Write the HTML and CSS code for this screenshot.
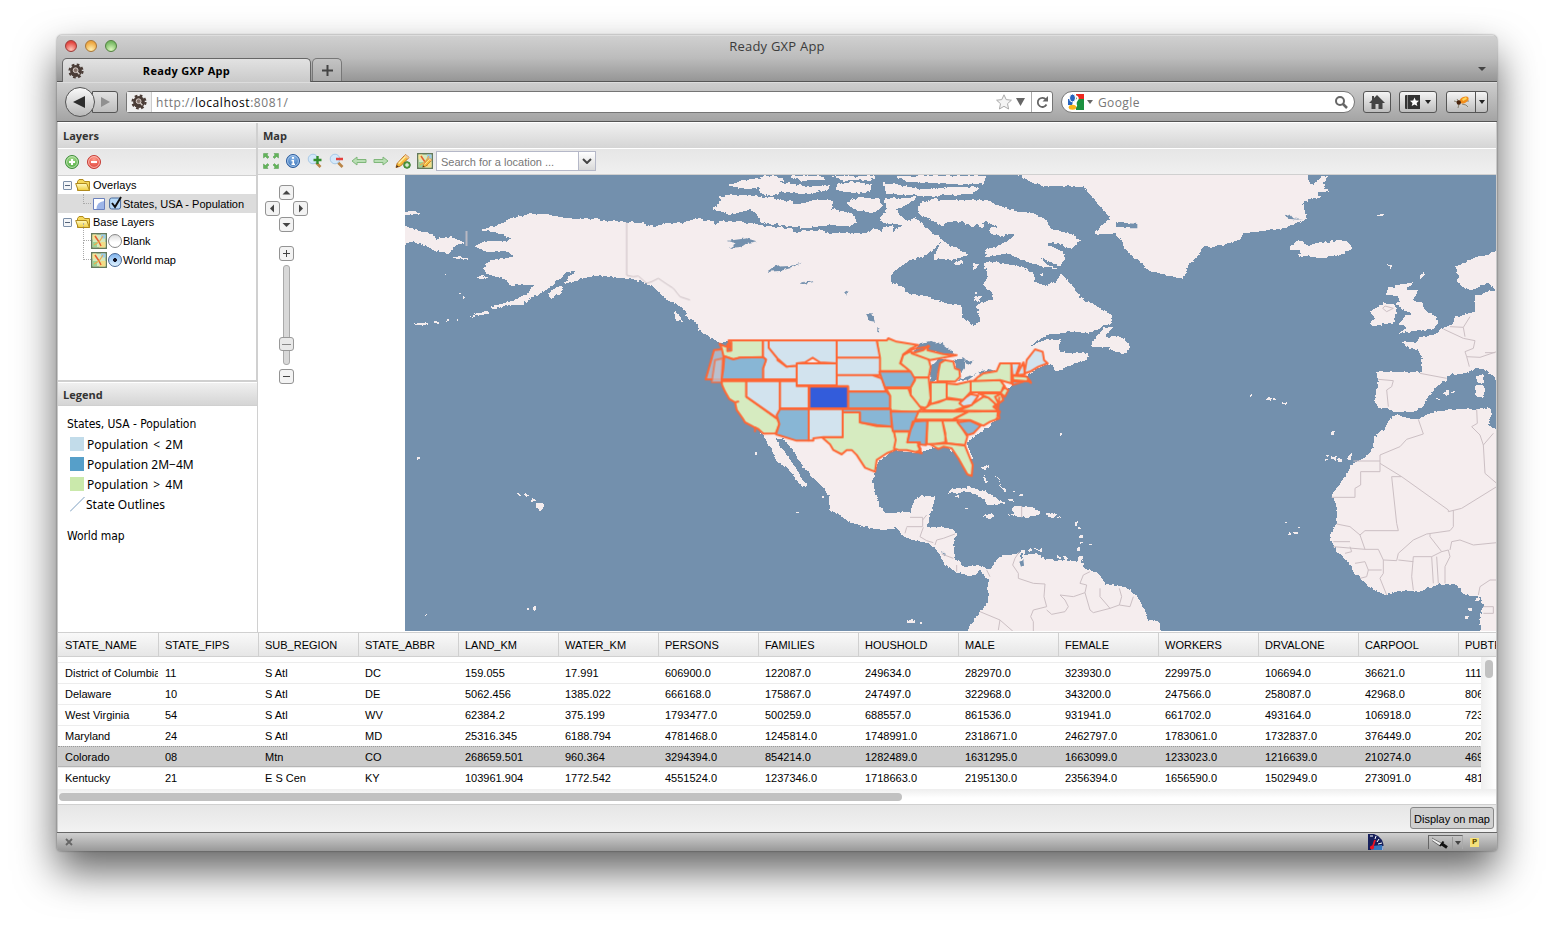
FILE: index.html
```html
<!DOCTYPE html>
<html lang="en">
<head>
<meta charset="utf-8">
<title>Ready GXP App</title>
<link rel="stylesheet" href="styles.css">
</head>
<body>
<svg class="defs" width="0" height="0">
  <defs>
    <linearGradient id="gold" x1="0" y1="0" x2="0" y2="1"><stop offset="0" stop-color="#fffbc4"/><stop offset="1" stop-color="#f0cd3e"/></linearGradient>
    <radialGradient id="green" cx=".5" cy=".3" r=".7"><stop offset="0" stop-color="#a5dc8c"/><stop offset="1" stop-color="#4aa83e"/></radialGradient>
    <radialGradient id="red" cx=".5" cy=".3" r=".7"><stop offset="0" stop-color="#ff9c8c"/><stop offset="1" stop-color="#dd3c33"/></radialGradient>
    <radialGradient id="blue" cx=".5" cy=".3" r=".7"><stop offset="0" stop-color="#8db8e8"/><stop offset="1" stop-color="#346eb5"/></radialGradient>
    <symbol id="gear" viewBox="0 0 16 16">
      <circle cx="8" cy="8" r="6.500" fill="none" stroke="#4a3c36" stroke-width="2.200" stroke-dasharray="2.700 2.400"/>
      <circle cx="8" cy="8" r="5.900" fill="#4a3c36"/><circle cx="7.600" cy="7.200" r="2.400" fill="#85736b" stroke="#d9d0cb" stroke-width="1"/><path d="M9.400 9l2 2.200" stroke="#d9d0cb" stroke-width="1.300"/>
    </symbol>
    <symbol id="folder" viewBox="0 0 16 14">
      <path d="M2.500 12.500v-9l1.500-2h4l1.500 2h5v9z" fill="#f5d85c" stroke="#b08a1d"/><path d="M.7 5.500h11l2.800 7H3.200z" fill="url(#gold)" stroke="#b08a1d"/>
    </symbol>
    <symbol id="mapicon" viewBox="0 0 16 16">
      <path d="M.7.700h14.600v14.600H.700z" fill="#d7e9bd" stroke="#647a5c" stroke-width="1.400"/><path d="M1.500 1.500h4v5h-4z" fill="#f4e493"/><path d="M10 1.500h4.500v4H10z" fill="#9acbe8"/><path d="M10 9h4.500v5.500H8z" fill="#f2dd86"/><path d="M2 9h4v5H2z" fill="#9ad494"/><path d="M4 3l4 6 2 4" fill="none" stroke="#e35f32" stroke-width="1.500"/><path d="M12 3l-4 6-5 3" fill="none" stroke="#ecaa4e" stroke-width="1.200"/>
    </symbol>
    <symbol id="pencil" viewBox="0 0 16 16">
      <path d="M1 14.500l1.200-4L10.500 1.500l3.500 3-8.500 8.600z" fill="#f8bd3c" stroke="#b86b16"/><path d="M3.500 10.500L11 3" stroke="#fff0a8" stroke-width="1.400"/><path d="M1 14.500l.8-2.500 2 1.700z" fill="#473222"/><path d="M10.500 1.500l3.500 3-1.200 1.300-3.500-3z" fill="#f2c79a"/>
    </symbol>
    <symbol id="lens" viewBox="0 0 16 16">
      <path d="M9 9.500l4.500 4.500" stroke="#b98547" stroke-width="2.600"/><circle cx="6" cy="6" r="4.800" fill="#d3e8fa" stroke="#a9c9e6"/>
    </symbol>
    <symbol id="cbtn" viewBox="0 0 15 15"><rect x=".5" y=".5" width="14" height="14" rx="2.500" fill="#f3f3f3" stroke="#939393"/></symbol>
  </defs>
</svg>

<div class="window">
  <header class="titlebar">
    <div class="lights"><i class="light red"></i><i class="light amber"></i><i class="light lime"></i></div>
    <span class="window-title">Ready GXP App</span>
  </header>
  <div class="tabs">
    <div class="tab"><svg width="16" height="16"><use href="#gear"/></svg><span>Ready GXP App</span></div>
    <div class="newtab"><svg width="11" height="11"><path d="M5.500 0v11M0 5.500h11" stroke="#444" stroke-width="2"/></svg></div>
    <svg class="tabmenu" width="8" height="5"><path d="M0 0h8L4 4z" fill="#444"/></svg>
  </div>
  <div class="nav">
    <div class="backfwd">
      <div class="back"><svg width="12" height="14"><path d="M12 1v12L0 7z" fill="#2e2e2e"/></svg></div>
      <div class="fwd"><svg width="9" height="10"><path d="M0 0v10l9-5z" fill="#909090"/></svg></div>
    </div>
    <div class="url">
      <div class="favicon"><svg width="16" height="16"><use href="#gear"/></svg></div>
      <span class="address">http://<b>localhost</b>:8081/</span>
      <svg width="16" height="16" viewBox="0 0 16 16"><path d="M8 .8l2.200 4.800 5.200.6-3.900 3.500 1.100 5.300L8 12.300 3.400 15l1.100-5.300L.6 6.200l5.200-.6z" fill="#f4f4f4" stroke="#aaa"/></svg>
      <svg class="urldrop" width="9" height="8"><path d="M0 0h9L4.500 8z" fill="#666"/></svg>
      <div class="reload"><svg width="13" height="13" viewBox="0 0 13 13"><path d="M10.500 8.500a4.600 4.600 0 1 1-.5-5" fill="none" stroke="#666" stroke-width="1.800"/><path d="M12 0v5.500H6.500z" fill="#666"/></svg></div>
    </div>
    <div class="search">
      <svg width="16" height="16"><path d="M7 0h9v16H7z" fill="#1b9140"/><path d="M8 0h8v5H9z" fill="#ee2820"/><path d="M0 0h8v16H0z" fill="#fff"/><path d="M0 5h5v6H0z" fill="#2864bd"/><ellipse cx="4.500" cy="4" rx="3" ry="4" fill="#2864bd" stroke="#fff"/><path d="M5 8q5 1 4 5l-2-1-3-1z" fill="#fff"/><path d="M8 2q3 2 1 4t-1 4" fill="none" stroke="#fff" stroke-width="2"/><ellipse cx="4.500" cy="13.300" rx="3.800" ry="2.500" fill="#fab51b"/></svg>
      <svg class="engine" width="6" height="4"><path d="M0 0h6L3 4z" fill="#666"/></svg>
      <span>Google</span>
      <svg width="13" height="13"><circle cx="5" cy="5" r="4" fill="none" stroke="#666" stroke-width="2"/><path d="M8 8l4 4" stroke="#666" stroke-width="2.500"/></svg>
    </div>
    <div class="navbtn home"><svg width="16" height="14"><path d="M8 0l8 8h-2.500v6h-4V9h-3v5h-4V8H0l3-3V1h2v2z" fill="#444"/></svg></div>
    <div class="navbtn marks"><svg width="16" height="14"><path d="M0 1q0-1 1-1h14v14H1q-1 0-1-1z" fill="#333"/><path d="M2.500 0v14" stroke="#888"/><path d="M9.500 2.500l1.300 3 3.200.3-2.400 2.100.8 3.200-2.900-1.700-2.800 1.700.8-3.200L5 5.800l3.200-.3z" fill="#fff"/></svg><svg width="6" height="4"><path d="M0 0h6L3 4z" fill="#222"/></svg></div>
    <div class="navbtn bug"><div class="bugicon"><svg width="16" height="14"><path d="M0 6l4 1M3 4l2 3M8 9l4 1 2 2M5 9l-1 4M12 6h3" fill="none" stroke="#8b8472"/><ellipse cx="10" cy="5" rx="5" ry="3" transform="rotate(-28 10 5)" fill="#f18d1c"/><path d="M8 4l4-2 1 2-4 2z" fill="#ffd858"/><circle cx="4.800" cy="7.500" r="2.200" fill="#49240d"/></svg></div><svg width="6" height="4"><path d="M0 0h6L3 4z" fill="#222"/></svg></div>
  </div>

  <main class="app">
    <div class="upper">
      <aside class="side">
        <section class="layers">
          <h2 class="panel-head">Layers</h2>
          <div class="toolbar layer-tools">
            <svg width="14" height="14"><circle cx="7" cy="7" r="6.500" fill="url(#green)" stroke="#3f8d3c"/><circle cx="7" cy="7" r="5.400" fill="none" stroke="#d4efca" stroke-width=".8"/><path d="M7 4v6M4 7h6" stroke="#fff" stroke-width="2"/></svg>
            <svg width="14" height="14"><circle cx="7" cy="7" r="6.500" fill="url(#red)" stroke="#c43e37"/><circle cx="7" cy="7" r="5.400" fill="none" stroke="#ffcfc8" stroke-width=".8"/><path d="M4 7h6" stroke="#fff" stroke-width="2"/></svg>
          </div>
          <ul class="tree">
            <li class="branch"><i class="minus"></i><svg width="16" height="14"><use href="#folder"/></svg><span>Overlays</span></li>
            <li class="leaf selected"><i class="elbow"></i><svg width="12" height="12"><path d="M.5.500h11v11H.500z" fill="#fff" stroke="#6a80bd"/><path d="M3.500 11q0-7 7.500-8v8z" fill="#9db5e8"/></svg><svg class="check" width="13" height="14"><rect x=".6" y="2" width="11" height="11" rx="2" fill="#b9dbf8" stroke="#4b6b9c"/><path d="M3 7l3 4 6-10" fill="none" stroke="#111" stroke-width="2"/></svg><span>States, USA - Population</span></li>
            <li class="branch"><i class="minus"></i><svg width="16" height="14"><use href="#folder"/></svg><span>Base Layers</span></li>
            <li class="leaf base"><i class="elbow"></i><svg width="16" height="16"><use href="#mapicon"/></svg><i class="radio"></i><span>Blank</span></li>
            <li class="leaf base"><i class="elbow"></i><svg width="16" height="16"><use href="#mapicon"/></svg><i class="radio on"></i><span>World map</span></li>
          </ul>
        </section>
        <section class="legend">
          <h2 class="panel-head">Legend</h2>
          <div class="legend-body">
            <p class="legend-title">States, USA - Population</p>
            <p class="key"><i class="swatch low"></i><span class="sign">Population &lt; 2M</span></p>
            <p class="key"><i class="swatch mid"></i><span>Population 2M−4M</span></p>
            <p class="key"><i class="swatch high"></i><span class="sign">Population &gt; 4M</span></p>
            <p class="key line"><svg width="15" height="15"><path d="M0 14.500L14.500 0" stroke="#7d9fc0"/></svg><span>State Outlines</span></p>
            <p class="legend-title second">World map</p>
          </div>
        </section>
      </aside>

      <section class="mapside">
        <h2 class="panel-head">Map</h2>
        <div class="toolbar map-tools">
          <svg width="16" height="16" viewBox="0 0 16 16"><g fill="#63b45a" stroke="#3d8d3b" stroke-width=".4"><path d="M.5.500h4.500L4 2l2 2-1.500 1.500-2-2L.500 5zM15.500.500H11L12 2l-2 2 1.500 1.500 2-2L15.500 5zM.500 15.500H5L4 14l2-2-1.500-1.500-2 2L.500 11zM15.500 15.500H11l1-1.500-2-2 1.500-1.500 2 2 2-1.500z"/></g></svg>
          <svg width="16" height="16"><circle cx="8" cy="8" r="6.500" fill="url(#blue)" stroke="#2c5b9b"/><circle cx="8" cy="8" r="5.400" fill="none" stroke="#bcd8f5" stroke-width=".8"/><path d="M7 4h2v1.700H7zM6.500 7H9v3.500h1V12H6.500v-1.500h1V8.300h-1z" fill="#fff"/></svg>
          <svg width="16" height="16"><use href="#lens"/><path d="M10.500 3v8M6.500 7h8" stroke="#328d2c" stroke-width="2.400"/></svg>
          <svg width="16" height="16"><use href="#lens"/><path d="M7 6h7" stroke="#e4403d" stroke-width="2.600"/></svg>
          <svg width="16" height="16"><path d="M1 8l5-4v2.500h9v3H6V12z" fill="#b9deb4" stroke="#7fb77a"/></svg>
          <svg width="16" height="16"><path d="M15 8l-5-4v2.500H1v3h9V12z" fill="#b9deb4" stroke="#7fb77a"/></svg>
          <svg width="16" height="16"><use href="#pencil"/><circle cx="12" cy="12" r="3.300" fill="#5da64b" stroke="#397d31"/><path d="M12 10v4M10 12h4" stroke="#fff"/></svg>
          <svg width="16" height="16"><use href="#mapicon"/><g transform="translate(5 4) scale(.7)"><use href="#pencil" width="16" height="16"/></g></svg>
          <div class="combo"><span>Search for a location ...</span><div class="trigger"><svg width="10" height="6"><path d="M1 1l4 4 4-4" fill="none" stroke="#444" stroke-width="2"/></svg></div></div>
        </div>
        <div class="mapview">
          <svg class="map" width="1091" height="456" viewBox="405 175 1091 456">
            <defs><filter id="coast" x="405" y="175" width="1091" height="456" filterUnits="userSpaceOnUse"><feTurbulence type="fractalNoise" baseFrequency=".24" numOctaves="2" seed="8" result="n"/><feDisplacementMap in="SourceGraphic" in2="n" scale="4" xChannelSelector="R" yChannelSelector="G"/></filter></defs>
            <path d="M405 175h1091v456H405z" fill="#7390ad"/>
            <g filter="url(#coast)">
              <g fill="#f5edee" shape-rendering="crispEdges">
                <g transform="translate(400 170) scale(.33333)">
                  <path d="M240 180L290 168 330 145 400 130 440 133 490 143 550 143 620 152 680 157 720 158 760 170 800 160 850 158 890 145 910 152 930 150 945 165 970 153 1040 158 1100 168 1180 176V512H985L960 520 930 500 895 480 895 465 860 440 850 415 800 390 765 355 740 340 700 328 640 322 600 317 560 322 530 332 490 343 525 303 500 306 480 325 462 345 430 365 400 382 365 405 330 405 280 418 270 410 340 393 385 367 402 346 350 342 330 348 320 330 290 320 260 312 250 295 270 270 300 265 340 262 325 243 260 245 220 228 270 212 320 212 330 203 290 188z"/>
                  <path d="M0 125L45 123 60 131 0 137zM0 165L60 180 100 195 110 207 150 200 192 217 165 230 145 250 100 240 60 222 30 215 0 235zM152 260L205 264 205 270 175 268zM445 370L475 350 493 350 480 372 450 385zM228 320L250 315 265 324 240 327zM203 442L235 430 265 422 262 430 225 440zM45 459H85V465H45zM95 456L118 452 115 460zM132 312L146 316 140 320zM188 375h6v8h-6zM178 369h5v5h-5zM815 422L832 430 850 457 830 450zM140 451h6v5h-6zM170 448h5v6h-5z"/>
                  <path d="M940 118L965 90 955 78 1020 74 1090 80 1180 95V165L1095 162 1065 130 1050 118 1010 130 985 134 960 122zM985 47L1030 30 1090 23 1150 20 1150 35 1100 48 1180 42V68L1080 62 1110 45 1045 58z"/>
                  <path d="M52 862h8v4h-8zM1065 848h7v8h-7z"/>
                </g>
                <g transform="translate(760 170) scale(.33333)">
                  <path d="M-30 180L40 190 100 188 180 178 200 188 320 188 340 175 365 185 370 168 400 168 400 182 440 165 480 175 500 190 535 195 545 212 520 240 490 260 450 270 400 305 390 335 430 350 440 370 500 378 560 400 605 405 605 440 640 468 662 455 650 405 695 390 697 370 670 345 683 320 670 275 720 278 780 290 820 310 825 335 855 348 885 335 905 312 940 350 965 385 1010 408 1055 435 1055 460 1020 475 980 490 940 485 880 492 840 505 810 530 850 512 900 505 900 545 930 550 985 550 980 570 930 585 890 605 880 590 862 580 760 640 700 690 710 750 620 820 640 870 600 860 550 825 470 850 400 840 350 880L180 840 40 795 -60 700 -60 512z"/>
                  <path d="M1060 470L1030 475 1005 505 992 530 1035 530 1065 545 1100 550 1110 530 1095 505 1060 498 1035 502z"/>
                  <path d="M480 100L510 88 600 90 680 90 710 105 760 122 820 130 860 150 870 175 940 195 962 210 935 238 880 215 862 225 910 245 912 270 900 290 840 262 860 285 905 300 850 290 800 275 740 250 680 262 672 240 710 230 740 215 765 195 715 175 680 155 640 170 600 155 555 155 550 170 500 145 475 130z"/>
                  <path d="M0 92L60 105 130 100 160 90 220 90 215 115 250 125 280 130 290 155 270 170 210 165 140 175 60 165 0 155zM0 40L70 38 150 50 210 45 205 60 130 72 70 65 30 80 0 68zM230 42L290 35 335 45 330 65 270 70 225 58zM0 20L40 15 50 28 20 37zM90 18L180 17 200 30 120 32zM215 18L340 17 345 28 250 32zM370 40L420 45 480 58 560 52 655 50 640 72 500 78 380 72zM410 18H680L670 42 520 40 440 35zM255 95L300 82 360 85 365 110 340 130 280 118zM375 85L470 82 440 105 405 120 440 155 460 140 520 190 490 195 430 165 370 160 360 140 380 118zM545 212L560 225 590 232 625 255 575 270 520 265zM580 280L605 270 612 280 590 288zM638 283L652 280 655 292 640 296zM640 380L665 378 660 395 642 392zM645 365h10v7h-10zM690 170L730 178 755 190 720 200 690 190zM650 160L680 162 665 175zM840 312h12v8h-12z"/>
                  <path d="M770 8H1360L1320 60 1290 130 1270 155 1180 180 1100 195 1000 190 1060 135 1070 165 1090 180 1090 230 1130 270 1190 310H1210V175L1130 170 1070 150 1055 130 1030 75 1000 55 930 48 840 48 800 30z"/>
                  <path d="M898 790h8v6h-8z"/>
                </g>
                <g transform="translate(1130 170) scale(.33333)">
                  <path d="M-180 5H530L540 40 555 45 560 30 585 17 595 17 580 40 585 55 600 67 565 67 570 82 550 85 520 98 530 150 500 157 460 175 400 183 340 190 330 208 280 225 220 233 205 255 180 280 158 327 130 320 90 310 65 308 30 275 0 240 -40 195 -40 170 20 172 20 160 -50 155z"/>
                  <path d="M480 230L505 210 535 228 560 218 600 215 625 210 655 215 668 235 640 253 600 258 575 265 540 260 508 258 510 240 480 240zM740 135L760 131 762 136 742 140zM770 283L788 285 783 298zM868 318L880 305 885 315 872 328zM768 375L775 352 790 350 800 345 850 337 830 358 866 360 850 390 875 400 888 425 920 440 925 460 910 477 850 482 800 493 830 475 805 462 825 440 840 430 800 405 810 390 790 375zM720 425L760 400 790 402 800 415 790 460 760 463 725 470 718 455 735 445zM978 290L1010 275 1040 260 1070 255 1110 235V370L1075 338 1040 355 1010 360 985 340 983 310z"/>
                  <path d="M1120 360L1080 362 1035 380 1035 425 980 440 965 465 930 477 920 492 870 502 860 515 815 515 830 530 860 540 875 565 875 605 850 605 740 605 745 640 735 680 745 715 775 715 790 725 850 725 880 710 895 680 920 650 950 630 950 615 1000 610 1040 595 1070 600 1100 630 1120 630V360zM1040 618L1058 613 1062 640 1042 640zM1035 650L1063 645 1060 683 1040 680zM935 672L953 662 957 675zM918 683h9v5h-9zM965 663h6v5h-6zM407 686h14v6h-14zM430 685h8v5h-8zM456 699L470 700 468 706zM362 675h5v5h-5z"/>
                </g>
                <g transform="translate(740 430) scale(.33333)">
                  <path d="M60 0H410V110L400 145 402 185 420 225 440 250 510 245 525 205 545 198 587 200 575 240 560 292 610 292 640 298 650 310 640 345 645 385 670 412 720 405 750 420 775 382 835 370 850 355 855 375 890 370 905 385 960 390 1025 395 1035 415 1075 430 1100 465 1150 468 1190 495 1215 540 1225 570 1260 575V640H680L690 585 720 545 745 515 745 450 720 420 700 440 670 432 650 428 610 400 600 375 565 340 500 325 470 295 430 300 370 290 320 270 270 240 265 190 230 155 190 110 150 50 130 25 108 25 115 40 130 60 165 110 200 165 185 172 145 115 110 95 95 60z"/>
                  <path d="M620 190L640 175 690 172 740 185 770 208 805 222 740 225 735 210 690 185 640 190zM730 258L755 250 768 262 740 264zM795 252L820 250 815 235 825 227 870 227 900 245 900 255 850 262zM918 250L950 253 945 262 920 260zM722 115L740 105 750 112 735 118zM730 135L745 155 735 160zM758 130L780 148 778 153zM780 165L800 180 795 187zM805 207h15v5h-15zM840 192h6v6h-6zM822 185h5v5h-5zM645 195h12v7h-12zM676 235h9v6h-9zM955 260h8v5h-8zM1006 275h9v9h-9zM1014 290h8v8h-8zM1020 315h9v9h-9zM1020 335h9v6h-9zM1012 355h8v7h-8zM868 355h8v8h-8zM885 357h12v4h-12zM898 358h7v5h-7zM1015 382L1030 382 1025 400 1010 398zM500 570L515 567 530 580 505 580zM540 577h8v6h-8zM45 67h6v8h-6zM246 195h7v7h-7zM170 244h6v5h-6zM1048 340h7v6h-7zM950 378h12v7h-12zM972 380h12v7h-12z"/>
                  <path d="M-670 190h12v7h-12zM-648 192L-630 195 -640 201zM-625 205h10v7h-10zM-612 220L-598 218 -585 230 -598 242 -610 235zM-945 553h6v5h-6zM-640 535h8v6h-8zM-620 532h7v8h-7z"/>
                </g>
                <g transform="translate(1250 360) scale(.33333)">
                  <path d="M430 165L445 165 475 175 505 178 530 165 570 152 640 147 690 148 720 143 725 160 715 195 750 215V825H695L690 780 700 740 690 710 640 705 620 675 570 672 510 695 450 692 408 705 370 690 330 655 310 635 300 610 265 580 250 555 240 525 255 500 262 460 258 430 245 410 270 370 310 310 350 290 370 260 372 230 400 210z"/>
                  <path d="M48 115h14v8H48zM70 114h8v6h-8zM95 130L110 130 108 137zM242 215h11v7h-11zM228 285L237 286 232 293zM240 293L258 290 255 300zM264 296h12v9h-12zM290 296L305 278 308 285 297 300zM100 483L112 485 110 492zM143 497h9v8h-9zM130 515h14v8h-14zM117 518h6v6h-6zM228 298h6v5h-6zM375 120L385 145 430 145 425 100 380 90zM430 145L445 152 500 150 530 125 500 100 430 90zM678 714h12v9h-12zM658 745h8v8h-8zM645 767h9v9h-9z"/>
                </g>
              </g>
              <g fill="#7390ad">
                <path transform="translate(760 170) scale(.33333)" d="M20 305L45 290 90 288 125 278 90 295 60 303zM120 340L145 332 165 335 130 342zM318 430L335 430 345 455 328 452zM255 365L265 360 262 376zM352 475h6v12h-6zM460 545L480 520 510 513 545 520 570 540 585 555 550 552 520 545 490 548zM510 640L512 590 540 565 560 570 535 600 530 630zM580 570L610 565 615 590 605 605 590 600zM612 568L638 575 630 585 615 580zM590 632L620 620 650 612 620 632zM655 605L690 598 705 603 660 612z"/>
                <path transform="translate(400 170) scale(.33333)" d="M980 213L1040 205 1070 214 1040 220 1025 230 990 234 1010 220zM1105 303L1120 290 1140 285 1140 303z"/>
                <path transform="translate(740 430) scale(.33333)" d="M838 395L850 390 852 405 843 410zM602 365L620 373 618 378zM843 370h6v17h-6z"/>
                <path transform="translate(1130 170) scale(.33333)" d="M465 135L480 133 490 145 520 150 470 146zM0 160L22 162 22 175 0 175z"/>
              </g>
            </g>
            <g class="borders" fill="none" stroke="#cbbfc3">
              <path d="M466.500 231v15" stroke="#b9b8c2"/>
              <path transform="translate(400 170) scale(.33333)" d="M680 157V316L700 320 715 318 740 340 755 335 775 325 800 342 820 355 840 380 870 390"/>
              <path transform="translate(740 430) scale(.33333)" d="M500 292L495 310M510 262H548V290H500M548 270L560 255M550 292L540 320 560 332 580 338M585 345L590 330 610 325 645 312M605 372L640 385M650 405V425M740 420L750 440M838 365L825 385 818 405 835 430 835 445 880 460 915 462 912 500 920 530 880 540 872 560 880 575V610M920 540L935 553 975 545 985 530 975 510 960 495 1000 500 1035 488 1040 465 1020 460 1030 435 1050 425M1035 488L1050 540 1060 548 1110 535 1080 500 1080 475M1110 535L1138 525 1145 500 1138 475M1138 525L1170 530 1180 500M720 545L780 570 820 605M780 570L775 600M845 228V262"/>
              <path transform="translate(1130 170) scale(.33333)" d="M745 628L790 632 785 650 770 660 775 710M870 610L950 625M940 477L1000 505 1035 512 1030 535 1005 545 1010 560 1050 562 1100 545M960 470L1000 472 1020 440M1000 472L1005 500M1010 560L1018 590M1065 548h30M758 415L770 425 790 415 765 408z"/>
              <path transform="translate(1250 360) scale(.33333)" d="M505 178L520 222 470 238 450 260 390 285V335H332V375L315 385V412H245M310 303H390M390 310L455 350 595 450 595 455 635 445 740 380M455 350H425L440 490 445 512H345L330 525 300 500 260 492M330 525L345 568H385L400 600 440 602 445 580 490 540 530 522 600 512 610 500V450M250 545L300 545M250 560L345 568M680 148L682 190 665 200 690 225 700 255 705 340 740 370M700 255L730 220M445 600L490 605M490 690L485 650 490 590H545L575 575 540 530V522M545 590L550 670M560 590L565 670M585 670V620L600 590 595 570 575 575M600 570L605 545 630 540 670 555 740 548M685 705L690 680 720 660 740 660M700 740H730V760H700M400 600L400 640 390 655 410 705M315 610L345 605 355 630 350 650 330 655M355 630H395M285 580L305 575 300 560"/>
            </g>
            <g class="states" transform="translate(690 325) scale(.33333)" stroke="#ff6633" stroke-width="6" stroke-linejoin="round">
              <g fill="#bfc3d0" fill-opacity=".75"><path d="M72 75L102 72 95 163H47z"/><path d="M75 105L98 100 95 172 65 172z" stroke-opacity=".65"/></g>
              <g fill="#d6ebc0">
                <path d="M88 56L100 62 118 68 116 46H219V96L150 98 130 103 100 92 95 70zM112 58v20l12-1V52z"/>
                <path d="M95 168H169V215L262 282 268 297 257 325 220 326 205 312 190 305 165 292 158 280 140 255 135 232 118 222 105 200 96 180z"/>
                <path d="M458 260L510 262V292L560 303 605 305 612 320 620 350 615 375 590 385 560 405 555 440 525 428 500 390 485 375 470 375 455 388 430 375 420 358 395 336H458z"/>
                <path d="M560 46H590L595 40 620 50 685 60 660 72 640 88 630 115 665 138H568V98z"/>
                <path d="M588 190H655L662 210 685 235 695 252 680 262 600 257V212z"/>
                <path d="M612 320H658L652 352H682L692 372 680 382 650 375 625 375 612 370 617 345z"/>
                <path d="M640 88L660 80 715 100 722 125 716 157H668L660 138 632 115z"/>
                <path d="M668 158H716L722 220 710 250 690 245 662 210V187L675 165z"/>
                <path d="M750 115L765 105 790 110 795 130 808 135 810 155 795 170 742 168 745 140zM665 85L700 75 715 62 712 75 760 87 800 90 760 98 720 105z"/>
                <path d="M722 172H770V222L745 232 722 237zM770 175L800 178 842 168V200L820 225 800 222 770 218zM698 255L722 237 770 222 810 225 825 245 790 257z"/>
                <path d="M685 260H835L790 283 672 284zM712 287H757L766 325V352L735 357 710 357zM757 287H802L832 335 825 360 770 355z"/>
                <path d="M720 358L770 355 825 362 848 420 845 453 832 448 805 400 785 370 760 365 745 372z"/>
                <path d="M790 283L835 260 925 258 928 280 900 290 880 302 840 285 810 285zM800 257L835 245 880 215 910 220 922 258z"/>
                <path d="M842 168L930 165 945 185 932 202H842zM865 155L880 145 920 138 930 115H964V175L930 165 850 168zM940 185L955 195 945 215 932 205zM865 205L932 205 940 225 920 240 895 218zM967 152L1010 155 1022 170 970 165z"/>
              </g>
              <g fill="#d2e3ee">
                <path d="M169 168H270V268L262 280 169 215zM219 46H236V68L265 95 262 105 290 125 320 122V163H219V130L228 103 219 96z"/>
                <path d="M236 46H440V115L390 112 368 98 345 112 320 115V122L290 125 262 100 236 68zM320 115H440V181H320zM270 168H320V183H356V250H270zM356 252H458V336H400L370 340V347H356z"/>
                <path d="M440 46H560L570 98H440zM440 98H570V150H440zM440 150H545L575 160 588 199H474V183H440zM808 235L830 215 842 207 865 212 845 240 820 245zM964 115H990L978 150H967zM1000 112L1005 148 980 150z"/>
                <path d="M1003 145L1010 105 1035 73 1058 80 1062 105 1073 115 1045 125 1020 140z"/>
              </g>
              <g fill="#88b6d5">
                <path d="M103 94L130 103 150 98 219 96 228 105 219 130V163H95L100 130zM270 252H356V347H320L258 328 268 297 260 270zM474 200H590L600 212V250H474zM458 252H602L605 305 560 300 510 292V262H458zM568 140H662L675 162 662 187H585L575 160zM602 260H685L675 285 660 318H608zM668 290L712 287 708 360 685 358 690 352H652zM802 292L840 287 872 302 850 325 832 330zM967 168L1000 170 968 180z"/>
              </g>
              <path d="M358 185H474V250H358z" fill="#335cdb"/>
              <path d="M683 360l12 25-18-5M935 205l-20 10 10 20-15 10 20 15-12 25M928 215l-6 60M640 90l30-18 50-8M1010 165l15 10M135 232l12-3M195 305v16" fill="none"/>
            </g>
          </svg>
          <div class="controls">
            <div class="pan">
              <svg class="n" width="15" height="15"><use href="#cbtn"/><path d="M3.500 9.500h8l-4-4z" fill="#444"/></svg>
              <svg class="w" width="15" height="15"><use href="#cbtn"/><path d="M9 3.500v8l-4-4z" fill="#444"/></svg>
              <svg class="e" width="15" height="15"><use href="#cbtn"/><path d="M6 3.500v8l4-4z" fill="#444"/></svg>
              <svg class="s" width="15" height="15"><use href="#cbtn"/><path d="M3.500 6h8l-4 4z" fill="#444"/></svg>
            </div>
            <div class="zoom">
              <svg width="15" height="15"><use href="#cbtn"/><path d="M7.500 4v7M4 7.500h7" stroke="#444"/></svg>
              <div class="track"><i class="thumb"></i></div>
              <svg width="15" height="15"><use href="#cbtn"/><path d="M4 7.500h7" stroke="#444"/></svg>
            </div>
          </div>
        </div>
      </section>
    </div>

    <section class="grid">
      <div class="ghead"><span>STATE_NAME</span><span>STATE_FIPS</span><span>SUB_REGION</span><span>STATE_ABBR</span><span>LAND_KM</span><span>WATER_KM</span><span>PERSONS</span><span>FAMILIES</span><span>HOUSHOLD</span><span>MALE</span><span>FEMALE</span><span>WORKERS</span><span>DRVALONE</span><span>CARPOOL</span><span>PUBTRANS</span></div>
      <div class="gbody">
        <div class="rows">
          <div class="row"><span>District of Columbia</span><span>11</span><span>S Atl</span><span>DC</span><span>159.055</span><span>17.991</span><span>606900.0</span><span>122087.0</span><span>249634.0</span><span>282970.0</span><span>323930.0</span><span>229975.0</span><span>106694.0</span><span>36621.0</span><span>111</span></div>
          <div class="row"><span>Delaware</span><span>10</span><span>S Atl</span><span>DE</span><span>5062.456</span><span>1385.022</span><span>666168.0</span><span>175867.0</span><span>247497.0</span><span>322968.0</span><span>343200.0</span><span>247566.0</span><span>258087.0</span><span>42968.0</span><span>806</span></div>
          <div class="row"><span>West Virginia</span><span>54</span><span>S Atl</span><span>WV</span><span>62384.2</span><span>375.199</span><span>1793477.0</span><span>500259.0</span><span>688557.0</span><span>861536.0</span><span>931941.0</span><span>661702.0</span><span>493164.0</span><span>106918.0</span><span>723</span></div>
          <div class="row"><span>Maryland</span><span>24</span><span>S Atl</span><span>MD</span><span>25316.345</span><span>6188.794</span><span>4781468.0</span><span>1245814.0</span><span>1748991.0</span><span>2318671.0</span><span>2462797.0</span><span>1783061.0</span><span>1732837.0</span><span>376449.0</span><span>202</span></div>
          <div class="row picked"><span>Colorado</span><span>08</span><span>Mtn</span><span>CO</span><span>268659.501</span><span>960.364</span><span>3294394.0</span><span>854214.0</span><span>1282489.0</span><span>1631295.0</span><span>1663099.0</span><span>1233023.0</span><span>1216639.0</span><span>210274.0</span><span>469</span></div>
          <div class="row"><span>Kentucky</span><span>21</span><span>E S Cen</span><span>KY</span><span>103961.904</span><span>1772.542</span><span>4551524.0</span><span>1237346.0</span><span>1718663.0</span><span>2195130.0</span><span>2356394.0</span><span>1656590.0</span><span>1502949.0</span><span>273091.0</span><span>481</span></div>
        </div>
        <div class="vscroll"><i></i></div>
      </div>
      <div class="hscroll"><i></i></div>
      <div class="gfoot"><button class="display">Display on map</button></div>
    </section>
  </main>

  <footer class="status">
    <svg width="8" height="8"><path d="M1 1l6 6M7 1L1 7" stroke="#666" stroke-width="1.800"/></svg>
    <svg class="gauge" width="16" height="16"><path d="M0 0h6q10 3 10 16H0z" fill="#17205c"/><path d="M4 12l10-1 1 5H3z" fill="#3576bd"/><path d="M2 2h3M8 2l-1 3M11 5l-2 3M14 9l-4 1M15 12v4" stroke="#fff"/><path d="M4 15L7 6" stroke="#f01020" stroke-width="1.800"/><circle cx="4" cy="13.500" r="2" fill="#f01020"/></svg>
    <div class="picker"><svg width="20" height="12"><path d="M3.500 2.500l9 5" stroke="#eee" stroke-width="2.600"/><path d="M3 1l10 5.500M3 3.500L11 9" stroke="#555" fill="none" stroke-width=".8"/><path d="M11 9l3.500-4.500" stroke="#111" stroke-width="2"/><path d="M13 7l5 3.500" stroke="#111" stroke-width="3"/></svg><div class="pdrop"><svg width="6" height="4"><path d="M0 0h6L3 4z" fill="#444"/></svg></div></div>
    <div class="pbadge">P</div>
  </footer>
</div>
</body>
</html>
```

FILE: styles.css
```css
* { box-sizing: border-box; }
body { margin: 0; padding: 35px 0 0 57px; width: 1554px; height: 929px; overflow: hidden; background: #fff; font-family: "Liberation Sans", Arial, sans-serif; font-size: 11px; color: #000; }
h2, p, ul { margin: 0; padding: 0; list-style: none; font-size: inherit; }
svg { display: block; flex: none; }
.defs { position: absolute; }
.window { width: 1440px; height: 816px; border-radius: 5px 5px 4px 4px; overflow: hidden; display: flex; flex-direction: column; background: #c8c8c8; box-shadow: 0 20px 40px rgba(0,0,0,.62), 0 0 2px rgba(0,0,0,.5); }

.titlebar { height: 23px; display: flex; align-items: center; background: linear-gradient(#d0d0d0, #bcbcbc); border-top: 1px solid #dedede; position: relative; }
.lights { display: flex; gap: 8px; padding: 0 0 2px 8px; }
.light { width: 12px; height: 12px; border-radius: 50%; border: 1px solid #77655a; }
.light.red { background: radial-gradient(circle at 50% 85%, #ffc5b8, #e2443f 75%); border-color: #9a3a37; }
.light.amber { background: radial-gradient(circle at 50% 85%, #fff0b0, #eda53e 75%); border-color: #a87637; }
.light.lime { background: radial-gradient(circle at 50% 85%, #dcf8bd, #76b863 75%); border-color: #52803f; }
.window-title { position: absolute; left: 0; right: 0; text-align: center; font: 13px "Open Sans", sans-serif; line-height: 18px; top: 1px; letter-spacing: .22px; color: #3c3c3c; }
.tabs { height: 24px; display: flex; align-items: flex-end; padding-left: 5px; background: linear-gradient(#bcbcbc, #969696); border-bottom: 1px solid #555; }
.tab { width: 249px; height: 24px; margin-bottom: -1px; display: flex; align-items: center; padding-left: 5px; background: linear-gradient(#e2e2e2, #cacaca); border: 1px solid #666; border-bottom: 0; border-radius: 5px 5px 0 0; font: bold 11px "Open Sans", sans-serif; letter-spacing: .33px; }
.tab span { flex: 1; text-align: center; padding-right: 43px; padding-left: 22px; white-space: nowrap; }
.newtab { width: 30px; height: 23px; margin-left: 1px; display: flex; align-items: center; justify-content: center; border: 1px solid #777; border-bottom: 0; border-radius: 5px 5px 0 0; background: linear-gradient(#c4c4c4, #aaa); }
.tabmenu { margin-left: auto; margin-right: 11px; margin-bottom: 9px; }
.nav { height: 40px; display: flex; align-items: center; padding-left: 8px; background: linear-gradient(#cdcdcd, #a4a4a4); border-top: 1px solid #ddd; border-bottom: 1px solid #555; }
.backfwd { display: flex; align-items: center; width: 53px; }
.back { width: 30px; height: 30px; border-radius: 50%; border: 1px solid #555; background: linear-gradient(#fafafa, #b8b8b8); display: flex; align-items: center; justify-content: center; z-index: 1; padding-right: 3px; }
.fwd { width: 26px; height: 22px; margin-left: -3px; border: 1px solid #555; border-radius: 0 3px 3px 0; background: linear-gradient(#e2e2e2, #bdbdbd); display: flex; align-items: center; padding-left: 8px; }
.url { width: 927px; height: 22px; margin-left: 8px; border: 1px solid #757575; border-radius: 3px; background: #fff; display: flex; align-items: center; font: 12px "Open Sans", sans-serif; }
.favicon { width: 25px; height: 20px; display: flex; align-items: center; justify-content: center; background: #eee; border-right: 1px solid #ccc; }
.address { flex: 1; padding-left: 4px; color: #777; letter-spacing: .54px; }
.address b { font-weight: normal; color: #000; }
.urldrop { margin: 0 6px 0 4px; }
.reload { width: 21px; height: 20px; border-left: 1px solid #aaa; display: flex; align-items: center; justify-content: center; }
.search { width: 294px; height: 22px; margin-left: 8px; border: 1px solid #757575; border-radius: 11px; background: #fff; display: flex; align-items: center; padding: 0 6px 0 6px; font: 12px "Open Sans", sans-serif; letter-spacing: .4px; color: #777; }
.engine { margin: 0 5px 0 3px; }
.search span { flex: 1; }
.navbtn { height: 22px; border: 1px solid #555; border-radius: 3px; background: linear-gradient(#f5f5f5, #bdbdbd); display: flex; align-items: center; justify-content: center; }
.home { width: 28px; margin-left: 8px; }
.marks { width: 38px; margin-left: 8px; gap: 4px; }
.bug { width: 42px; margin-left: 9px; gap: 3px; }
.bugicon { width: 27px; height: 20px; display: flex; align-items: center; justify-content: center; border-right: 1px solid #555; }

.app { height: 710px; margin: 0 1px 0 1px; background: #fff; display: flex; flex-direction: column; }
.upper { height: 511px; flex: none; display: flex; border-bottom: 1px solid #d0d0d0; border-top: 1px solid #fff; }
.side { width: 200px; border-right: 1px solid #d0d0d0; display: flex; flex-direction: column; }
.panel-head { height: 25px; padding: 0 5px; font: bold 11px/25px "Open Sans", sans-serif; color: #333; background: linear-gradient(#f0f0f0, #d5d5d5); }
.layers { height: 259px; border-right: 1px solid #d0d0d0; border-bottom: 2px solid #d0d0d0; }
.toolbar { display: flex; align-items: center; background: linear-gradient(#e6e6e6, #f0f0f0); border-top: 1px solid #fff; border-bottom: 1px solid #d0d0d0; }
.layer-tools { height: 28px; padding: 0 0 1px 7px; gap: 8px; }
.tree li { height: 19px; display: flex; align-items: center; white-space: nowrap; }
.tree .branch { height: 18px; padding-left: 5px; }
.branch svg { margin: 0 2px 0 3px; }
.minus { width: 9px; height: 9px; border: 1px solid #7c8fa8; border-radius: 1px; background: linear-gradient(#55647a, #55647a) center/5px 1px no-repeat, #f3f5f8; }
.elbow { width: 8px; height: 10px; margin: -10px 2px 0 25px; border-left: 1px dotted #aaa; border-bottom: 1px dotted #aaa; }
.leaf.selected { background: #dcdcdc; }
.check { margin: 0 1px 2px 0; }
.base .elbow { margin-right: 0; height: 18px; margin-top: -18px; }
.radio { width: 14px; height: 14px; border: 1px solid #888; border-radius: 50%; background: linear-gradient(#ddd, #fff 60%); margin: 0 1px; }
.radio.on { border-color: #466898; background: radial-gradient(circle, #112 0 1.6px, transparent 2.2px), linear-gradient(#82b5ee, #dff2ff); }
.selected .elbow + svg { margin-right: 4px; }
.legend { flex: 1; }
.legend .panel-head { height: 24px; line-height: 23px; border-top: 1px solid #fff; border-bottom: 1px solid #d0d0d0; }
.legend-body { padding: 10px 0 0 9px; font-size: 12px; }
.legend-title { font: 12px/17px "DejaVu Sans", sans-serif; font-stretch: condensed; letter-spacing: -.07px; }
.legend-title.second { margin-top: 14px; }
.key { height: 20px; display: flex; align-items: center; gap: 2px; padding-left: 3px; font: 12px "Noto Sans", sans-serif; letter-spacing: 0; white-space: nowrap; }
.key.line { gap: 1px; }
.legend-title + .key { margin-top: 1px; }
.sign { word-spacing: 2px; }
.swatch { width: 14px; height: 14px; margin-right: 1px; }
.low { background: #c2dcea; } .mid { background: #569fc9; } .high { background: #cae9ab; }

.mapside { flex: 1; display: flex; flex-direction: column; }
.map-tools { height: 27px; padding: 0 0 2px 5px; gap: 6px; }
.combo { width: 160px; height: 20px; margin-left: -3px; border: 1px solid #b5b8c8; background: #fff; display: flex; align-items: center; justify-content: space-between; padding-left: 4px; color: #777; }
.combo span { padding-top: 2px; }
.trigger { width: 17px; height: 18px; border-left: 1px solid #b5b8c8; background: linear-gradient(#fff, #d9d9d9); display: flex; align-items: center; justify-content: center; }
.mapview { flex: 1; position: relative; display: flex; justify-content: flex-end; background: #fff; }
.borders path { stroke-width: 3; }
.borders path:first-child { stroke-width: 2; }
.controls { position: absolute; left: 7px; top: 10px; width: 43px; }
.pan { display: grid; grid-template-columns: 14px 14px 14px; grid-template-rows: 16px 16px 15px; height: 47px; }
.pan .n { grid-area: 1 / 2; } .pan .w { grid-area: 2 / 1; } .pan .e { grid-area: 2 / 3; } .pan .s { grid-area: 3 / 2; }
.zoom { display: flex; flex-direction: column; align-items: center; margin-top: 14px; }
.track { width: 7px; height: 100px; margin: 4px 0; border: 1px solid #aaa; border-radius: 3px; background: #d8d8d8; display: flex; justify-content: center; }
.thumb { flex: none; width: 15px; height: 14px; margin-top: 71px; border: 1px solid #999; border-radius: 3px; background: linear-gradient(#888, #888) center/9px 1px no-repeat, #e9e9e9; }

.grid { height: 199px; overflow: hidden; }
.ghead { height: 24px; display: flex; background: linear-gradient(#f9f9f9, #e6e6e6); border-bottom: 1px solid #d0d0d0; overflow: hidden; }
.ghead span, .row span { flex: none; width: 100px; padding-left: 7px; overflow: hidden; white-space: nowrap; }
.ghead span { line-height: 25px; }
.ghead span + span { border-left: 1px solid #d0d0d0; padding-left: 6px; }
.gbody { height: 132px; display: flex; }
.rows { width: 1423px; overflow: hidden; padding-top: 5px; }
.row { width: 1500px; height: 21px; display: flex; line-height: 21px; border-top: 1px solid #ededed; }
.row.picked { background: #ccc; border-top: 1px dotted #999; box-shadow: inset 0 -1px #b5b5b5; }
.vscroll { width: 15px; background: linear-gradient(90deg, #eee, #fff); display: flex; justify-content: center; padding-top: 3px; }
.vscroll i { width: 8px; height: 18px; border-radius: 4px; background: #c1c1c1; }
.hscroll { height: 15px; background: linear-gradient(#eee, #fff 60%); padding: 4px 1px; }
.hscroll i { display: block; width: 843px; height: 8px; border-radius: 4px; background: #c1c1c1; }
.gfoot { height: 28px; border-top: 1px solid #d0d0d0; background: linear-gradient(#e6e6e6, #f2f2f2); display: flex; justify-content: flex-end; padding: 2px 2px 0 0; }
.display { width: 84px; height: 22px; padding: 2px 0 0; border: 1px solid #888; border-radius: 3px; background: #d0d0d0; font: 11px "Liberation Sans", sans-serif; white-space: nowrap; }

.status { height: 19px; border-top: 1px solid #666; background: linear-gradient(#d0d0d0, #989898); display: flex; align-items: center; padding-left: 8px; }
.gauge { margin-left: 1295px; }
.picker { margin-left: 44px; width: 35px; height: 14px; border: 1px solid #666; border-right-color: #aaa; border-bottom: 0; display: flex; align-items: center; }
.pdrop { width: 12px; height: 12px; margin-left: 3px; border-left: 1px solid #999; display: flex; align-items: center; justify-content: center; }
.pbadge { width: 9px; height: 9px; margin-left: 7px; background: #f5e17c; font: bold 7px/9px "DejaVu Sans", sans-serif; text-align: center; color: #665100; }
```
